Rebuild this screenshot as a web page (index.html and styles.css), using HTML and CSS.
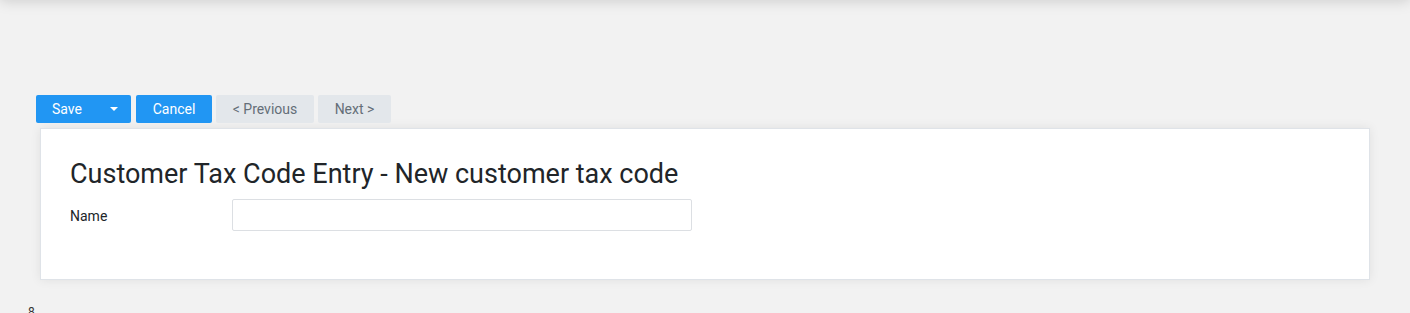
FILE: index.html
```html
<!DOCTYPE html>
<html>
<head>
<meta charset="utf-8">
<link rel="stylesheet" href="styles.css">
</head>
<body>
<div class="topbar"></div>
<div class="page">
  <div class="toolbar">
    <button class="btn btn-primary btn-save"><span>Save</span><span class="caret"></span></button>
    <button class="btn btn-primary btn-cancel">Cancel</button>
    <button class="btn btn-default btn-prev">&lt; Previous</button>
    <button class="btn btn-default btn-next">Next &gt;</button>
  </div>
  <div class="card">
    <h1 class="title">Customer Tax Code Entry - New customer tax code</h1>
    <div class="row">
      <label class="label">Name</label>
      <input class="input" type="text">
    </div>
  </div>
  <div class="footer">8</div>
</div>
</body>
</html>
```
FILE: styles.css
```css
html, body {
  margin: 0;
  padding: 0;
  background: #f2f2f2;
  font-family: Roboto, "Liberation Sans", sans-serif;
  overflow: hidden;
  height: 313px;
}
.topbar {
  position: fixed;
  top: -60px;
  left: 0;
  right: 0;
  height: 60px;
  background: #fff;
  box-shadow: 0 0 14px rgba(0, 0, 0, 0.18);
}
.page {
  padding-top: 95px;
}
.toolbar {
  display: flex;
  gap: 4px;
  padding-left: 36px;
  height: 28px;
}
.btn {
  font-family: Roboto, "Liberation Sans", sans-serif;
  font-size: 14px;
  border: none;
  border-radius: 2px;
  height: 28px;
  padding: 0;
  display: flex;
  align-items: center;
  justify-content: center;
  cursor: pointer;
}
.btn-primary {
  background: #2196f3;
  color: #fff;
}
.btn-default {
  background: #e3e7eb;
  color: #646e78;
}
.btn-save {
  width: 95px;
  justify-content: flex-start;
  padding-left: 16px;
  margin-right: 1px;
}
.caret {
  display: inline-block;
  width: 0;
  height: 0;
  border-left: 4px solid transparent;
  border-right: 4px solid transparent;
  border-top: 4px solid #fff;
  margin-left: 28px;
}
.btn-cancel { width: 76px; }
.btn-prev { width: 98px; }
.btn-next { width: 73px; }
.card {
  margin: 5px 40px 0 40px;
  height: 152px;
  box-sizing: border-box;
  background: #fff;
  border: 1px solid #dfe3e8;
  box-shadow: 0 0 10px rgba(0, 0, 0, 0.08);
  padding: 27px 29px 0 29px;
}
.title {
  margin: 0;
  font-weight: 400;
  font-size: 27px;
  line-height: 36px;
  color: #212529;
}
.row {
  display: flex;
  align-items: center;
  margin-top: 7px;
}
.label {
  width: 162px;
  font-size: 14px;
  color: #212529;
  padding-top: 2px;
}
.input {
  width: 460px;
  height: 32px;
  box-sizing: border-box;
  border: 1px solid #dcdfe3;
  border-radius: 2px;
  background: #fff;
  margin: 0;
}
.footer {
  padding-left: 28px;
  margin-top: 25px;
  font-size: 12px;
  color: #333;
}
```
